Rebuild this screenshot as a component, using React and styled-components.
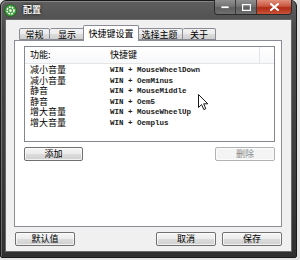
import React from 'react';
import styled, { createGlobalStyle } from 'styled-components';

const Global = createGlobalStyle`
  body {
    margin: 0;
    background: #e4e4e4;
    font-family: "Noto Sans CJK SC", "Noto Sans", sans-serif;
  }
  svg {
    display: block;
  }
`;

const Win = styled.div`
  width: 297px;
  height: 258px;
  box-sizing: border-box;
  display: flex;
  flex-direction: column;
  border: 1px solid #1a1a1a;
  border-radius: 6px 6px 2px 2px;
  background: linear-gradient(to bottom, #5e5e5e 0%, #4a4a4a 12%, #3e3e3e 60%, #303030 100%);
  box-shadow: inset 1px 1px 0 rgba(255, 255, 255, 0.25);
`;

const TitleBar = styled.div`
  height: 19px;
  display: flex;
  align-items: flex-start;
  padding-left: 3px;
  padding-right: 4px;
`;

const AppIcon = styled.div`
  margin-top: 3px;
  width: 13px;
  height: 13px;
`;

const Title = styled.div`
  margin: 3px 0 0 6px;
  font-size: 9px;
  line-height: 12px;
  font-weight: bold;
  color: #f2f2f2;
  text-shadow: 0 0 3px #000;
  flex: 1;
`;

const Caption = styled.div`
  display: flex;
  height: 14px;
  margin-top: -1px;
  border: 1px solid #2a2a2a;
  border-top: none;
  border-radius: 0 0 4px 4px;
  overflow: hidden;
`;

const CapBtn = styled.div`
  width: ${p => p.$w}px;
  height: 100%;
  display: flex;
  align-items: center;
  justify-content: center;
  border-left: ${p => (p.$first ? 'none' : '1px solid #3a3a3a')};
  background: ${p =>
    p.$close
      ? 'linear-gradient(to bottom, #e0907e 0%, #c9553e 45%, #b02a14 55%, #c9533a 100%)'
      : 'linear-gradient(to bottom, #8f8f8f 0%, #747474 45%, #5e5e5e 55%, #707070 100%)'};
`;

const Client = styled.div`
  flex: 1;
  margin: 0 4px 5px 4px;
  border: 1px solid #6a6a6a;
  background: #f0f0f0;
  display: flex;
  flex-direction: column;
  padding: 6px 9px 5px 8px;
`;

const TabStrip = styled.div`
  display: flex;
  align-items: flex-end;
  height: 14px;
  padding-left: 5px;
`;

const Tab = styled.div`
  box-sizing: border-box;
  width: ${p => (p.$active ? p.$w + 4 : p.$w)}px;
  height: ${p => (p.$active ? 16 : 12)}px;
  margin: ${p => (p.$active ? '0 -2px -1px -2px' : '0')};
  position: relative;
  z-index: ${p => (p.$active ? 1 : 0)};
  border: 1px solid #898c95;
  border-bottom: ${p => (p.$active ? 'none' : '1px solid #898c95')};
  border-left: ${p => (p.$first || p.$active ? '1px solid #898c95' : 'none')};
  border-radius: 2px 2px 0 0;
  background: ${p =>
    p.$active ? '#fff' : 'linear-gradient(to bottom, #f2f2f2 0%, #ebebeb 50%, #dddddd 50%, #cfcfcf 100%)'};
  font-size: 9px;
  line-height: 11px;
  text-align: center;
  color: #000;
  padding-top: ${p => (p.$active ? 2 : 0)}px;
`;

const Panel = styled.div`
  height: 187px;
  box-sizing: border-box;
  border: 1px solid #898c95;
  background: #fff;
  padding: 5px 6px 0 9px;
  display: flex;
  flex-direction: column;
`;

const List = styled.div`
  position: relative;
  height: 96px;
  box-sizing: border-box;
  border: 1px solid #828790;
  background: #fff;
`;

const Header = styled.div`
  display: grid;
  grid-template-columns: 80px 155px 1fr;
  height: 16px;
  border-bottom: 1px solid #e5e5e5;
  background: linear-gradient(to bottom, #ffffff, #f7f8fa);
  font-size: 9px;
  line-height: 16px;
  margin-bottom: 1px;
`;

const HeadCell = styled.div`
  padding-left: ${p => p.$pl}px;
  border-right: ${p => (p.$sep ? '1px solid #e3e6ea' : 'none')};
`;

const Row = styled.div`
  display: grid;
  grid-template-columns: 80px 1fr;
  height: 10.5px;
  align-items: center;
`;

const NameCell = styled.div`
  padding-left: 5px;
  font-size: 9px;
  line-height: 10px;
`;

const KeyCell = styled.div`
  padding-left: 5px;
  font-family: "Liberation Mono", "DejaVu Sans Mono", monospace;
  font-size: 7.5px;
  font-weight: bold;
  line-height: 10px;
  white-space: pre;
  color: #1a1a1a;
`;

const Cursor = styled.svg`
  position: absolute;
  left: 173px;
  top: 47px;
`;

const ButtonRow = styled.div`
  display: flex;
  justify-content: space-between;
  margin-top: 5px;
`;

const Btn = styled.div`
  box-sizing: border-box;
  width: ${p => p.$w || 60}px;
  height: 14px;
  border: 1px solid ${p => (p.$disabled ? '#b0b3b6' : '#707070')};
  border-radius: 2px;
  background: ${p =>
    p.$disabled
      ? '#f4f4f4'
      : 'linear-gradient(to bottom, #f6f6f6 0%, #ebebeb 50%, #dddddd 50%, #cfcfcf 100%)'};
  box-shadow: inset 0 0 0 1px rgba(255, 255, 255, 0.7);
  color: ${p => (p.$disabled ? '#8a8a8a' : '#000')};
  font-size: 9px;
  line-height: 12px;
  text-align: center;
`;

const Bottom = styled.div`
  display: flex;
  margin-top: 5px;
  padding-left: 1px;
  gap: 6px;
`;

const Spacer = styled.div`
  flex: 1;
`;

const tabs = [
  { label: '常规', w: 31 },
  { label: '显示', w: 35 },
  { label: '快捷键设置', w: 52, active: true },
  { label: '选择主题', w: 46 },
  { label: '关于', w: 33 },
];

const rows = [
  ['减小音量', 'WIN + MouseWheelDown'],
  ['减小音量', 'WIN + OemMinus'],
  ['静音', 'WIN + MouseMiddle'],
  ['静音', 'WIN + Oem5'],
  ['增大音量', 'WIN + MouseWheelUp'],
  ['增大音量', 'WIN + Oemplus'],
];

const App = () => (
  <>
    <Global />
    <Win>
      <TitleBar>
        <AppIcon>
          <svg width="13" height="13" viewBox="0 0 13 13">
            <circle cx="6.5" cy="6.5" r="6" fill="#3f9d3a" stroke="#1f5e1c" strokeWidth="0.8" />
            <circle cx="6.5" cy="6.5" r="3.4" fill="none" stroke="#fff" strokeWidth="1.6" strokeDasharray="1.8 1" />
            <circle cx="6.5" cy="6.5" r="1.3" fill="#fff" />
          </svg>
        </AppIcon>
        <Title>配置</Title>
        <Caption>
          <CapBtn $w={20} $first>
            <svg width="8" height="3"><rect x="0" y="0" width="8" height="2.5" fill="#fff" stroke="#333" strokeWidth="0.5" /></svg>
          </CapBtn>
          <CapBtn $w={20}>
            <svg width="9" height="7"><rect x="0.5" y="0.5" width="8" height="6" fill="none" stroke="#fff" strokeWidth="1.4" /></svg>
          </CapBtn>
          <CapBtn $w={34} $close>
            <svg width="9" height="8" viewBox="0 0 9 8">
              <path d="M1 1 L8 7 M8 1 L1 7" stroke="#fff" strokeWidth="2" strokeLinecap="square" />
            </svg>
          </CapBtn>
        </Caption>
      </TitleBar>
      <Client>
        <TabStrip>
          {tabs.map((t, i) => (
            <Tab key={t.label} $w={t.w} $active={t.active} $first={i === 0}>
              {t.label}
            </Tab>
          ))}
        </TabStrip>
        <Panel>
          <List>
            <Header>
              <HeadCell $pl={5}>功能:</HeadCell>
              <HeadCell $pl={5} $sep>快捷键</HeadCell>
              <HeadCell />
            </Header>
            {rows.map((r, i) => (
              <Row key={i}>
                <NameCell>{r[0]}</NameCell>
                <KeyCell>{r[1]}</KeyCell>
              </Row>
            ))}
            <Cursor width="11" height="17" viewBox="0 0 11 17">
              <path d="M0.5 0.5 L0.5 13.5 L3.6 10.6 L5.8 15.6 L7.8 14.7 L5.7 9.8 L9.8 9.8 Z" fill="#fff" stroke="#000" strokeWidth="0.9" strokeLinejoin="round" />
            </Cursor>
          </List>
          <ButtonRow>
            <Btn $w={59}>添加</Btn>
            <Btn $w={60} $disabled>删除</Btn>
          </ButtonRow>
        </Panel>
        <Bottom>
          <Btn $w={60}>默认值</Btn>
          <Spacer />
          <Btn $w={60}>取消</Btn>
          <Btn $w={60}>保存</Btn>
        </Bottom>
      </Client>
    </Win>
  </>
);

export default App;
